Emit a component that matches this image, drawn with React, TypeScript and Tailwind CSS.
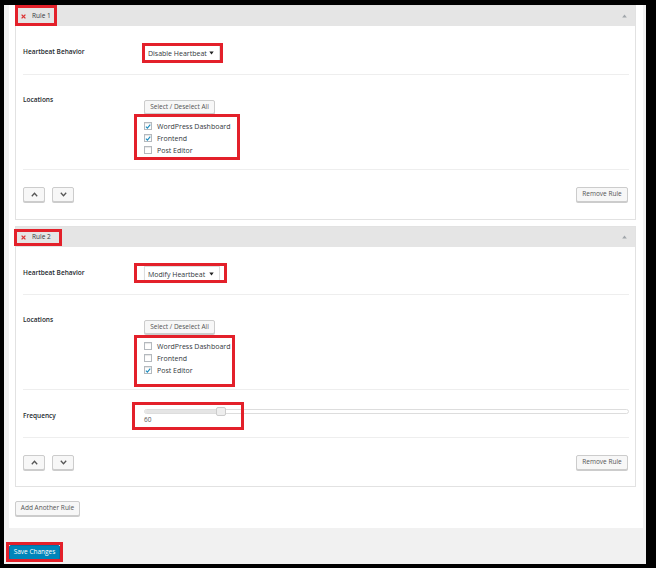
import React from "react";

function XIcon() {
  return (
    <svg width="5" height="5" viewBox="0 0 5 5" className="shrink-0">
      <path d="M0.6 0.6 L4.4 4.4 M4.4 0.6 L0.6 4.4" stroke="#dc3232" strokeWidth="1.3" fill="none" />
    </svg>
  );
}

function UpTri() {
  return (
    <svg width="5" height="4" viewBox="0 0 5 4">
      <path d="M2.5 0.5 L4.8 3.5 L0.2 3.5 Z" fill="#a0a5aa" />
    </svg>
  );
}

function DownTri() {
  return (
    <svg width="5" height="4" viewBox="0 0 5 4">
      <path d="M0.3 0.5 L4.7 0.5 L2.5 3.6 Z" fill="#222" />
    </svg>
  );
}

function Chevron({ up }: { up: boolean }) {
  return (
    <svg width="7" height="5" viewBox="0 0 7 5">
      <path
        d={up ? "M0.8 4.2 L3.5 1.3 L6.2 4.2" : "M0.8 0.8 L3.5 3.7 L6.2 0.8"}
        fill="none"
        stroke="#555"
        strokeWidth="1.3"
      />
    </svg>
  );
}

function Check({ checked, label }: { checked: boolean; label: string }) {
  return (
    <div className="flex items-center h-[12px] gap-[5px]">
      <div className="w-[8px] h-[8px] border border-[#b4b9be] bg-white shadow-[inset_0_1px_1px_rgba(0,0,0,0.1)] flex items-center justify-center">
        {checked && (
          <svg width="7" height="7" viewBox="0 0 8 8">
            <path d="M1.2 4.2 L3.2 6.2 L7 1.4" fill="none" stroke="#1e8cbe" strokeWidth="1.5" />
          </svg>
        )}
      </div>
      <span className="text-[7px] leading-none text-[#32373c]">{label}</span>
    </div>
  );
}

function WpButton({ children, className }: { children: React.ReactNode; className: string }) {
  return (
    <div
      className={
        "flex items-center justify-center bg-[#f7f7f7] border border-[#cccccc] rounded-[2px] shadow-[0_1px_0_#cccccc] text-[6.5px] leading-none text-[#555] " +
        className
      }
    >
      {children}
    </div>
  );
}

function Label({ text, pt }: { text: string; pt: string }) {
  return (
    <div className={"w-[121px] shrink-0 text-[6.5px] leading-[10px] font-semibold text-[#23282d] " + pt}>{text}</div>
  );
}

function MoveRow({ h }: { h: string }) {
  return (
    <div className={"mx-[7px] mr-[6px] flex justify-between items-start pt-[17px] " + h}>
      <div className="flex gap-[7px]">
        <WpButton className="w-[22px] h-[15px]">
          <Chevron up />
        </WpButton>
        <WpButton className="w-[22px] h-[15px]">
          <Chevron up={false} />
        </WpButton>
      </div>
      <WpButton className="w-[52px] h-[15px] mr-[1px]">Remove Rule</WpButton>
    </div>
  );
}

type RuleProps = {
  title: string;
  behavior: string;
  checks: boolean[];
  headerRed: string;
  selectRed: string;
  checksRed: string;
  row1H: string;
  freq: boolean;
  lastH: string;
};

function Rule(p: RuleProps) {
  const names = ["WordPress Dashboard", "Frontend", "Post Editor"];
  return (
    <div className="border border-[#e2e2e2] bg-white flex flex-col">
      <div className="h-[20px] bg-[#e5e5e5] flex items-center justify-between pl-[5px] pr-[8px]">
        <div className="relative flex items-center gap-[6px]">
          <XIcon />
          <span className="text-[6.5px] leading-none font-medium text-[#32373c]">{p.title}</span>
          <div className={"absolute border-[3px] border-[#e3202a] " + p.headerRed} />
        </div>
        <UpTri />
      </div>

      <div className={"mx-[7px] mr-[6px] border-b border-[#eeeeee] flex items-start " + p.row1H}>
        <Label text="Heartbeat Behavior" pt="pt-[21px]" />
        <div className="pt-[19px]">
          <div className="relative w-[76px] h-[16px] border border-[#dddddd] bg-white shadow-[0_1px_1px_rgba(0,0,0,0.06)] flex items-center justify-between pl-[3px] pr-[5px]">
            <span className="text-[7px] leading-none text-[#32373c]">{p.behavior}</span>
            <DownTri />
            <div className={"absolute border-[3px] border-[#e3202a] " + p.selectRed} />
          </div>
        </div>
      </div>

      <div className="mx-[7px] mr-[6px] h-[95px] border-b border-[#eeeeee] flex items-start">
        <Label text="Locations" pt="pt-[20px]" />
        <div className="pt-[25px] flex flex-col">
          <WpButton className="w-[71px] h-[14px]">Select / Deselect All</WpButton>
          <div className="relative mt-[6px] flex flex-col">
            {names.map((n, i) => (
              <Check key={n} checked={p.checks[i]} label={n} />
            ))}
            <div className={"absolute border-[3px] border-[#e3202a] " + p.checksRed} />
          </div>
        </div>
      </div>

      {p.freq && (
        <div className="mx-[7px] mr-[6px] h-[48px] border-b border-[#eeeeee] flex items-start">
          <Label text="Frequency" pt="pt-[21px]" />
          <div className="pt-[17px] flex-1 flex flex-col">
            <div className="relative h-[9px] flex items-center">
              <div className="w-full h-[5px] rounded-[3px] border border-[#dddddd] bg-white overflow-hidden">
                <div className="w-[76px] h-full bg-[#e5e5e5]" />
              </div>
              <div className="absolute left-[72px] top-0 w-[10px] h-[9px] rounded-[2px] bg-[#eeeeee] border border-[#cccccc]" />
              <div className="absolute -left-[12px] -top-[5px] w-[112px] h-[28px] border-[3px] border-[#e3202a]" />
            </div>
            <span className="text-[6.5px] leading-[8px] text-[#555] mt-[0px]">60</span>
          </div>
        </div>
      )}

      <MoveRow h={p.lastH} />
    </div>
  );
}

export default function App() {
  return (
    <div className="w-[656px] h-[568px] bg-black pt-[5px] pl-[4px] pr-[10px] pb-[4px] font-['Open_Sans',sans-serif]">
      <div className="h-full bg-[#f1f1f1] flex flex-col">
        <div className="ml-[5px] w-[634px] bg-white pl-[6px] pr-[7px] pb-[12px] flex flex-col">
          <Rule
            title="Rule 1"
            behavior="Disable Heartbeat"
            checks={[true, true, false]}
            headerRed="-left-[6px] -right-[6px] -top-[8px] -bottom-[7px]"
            selectRed="-left-[3px] -right-[4px] -top-[3px] -bottom-[3px]"
            checksRed="-left-[10px] w-[106px] -top-[6px] -bottom-[4px]"
            row1H="h-[49px]"
            freq={false}
            lastH="h-[49px]"
          />
          <div className="mt-[6px]">
            <Rule
              title="Rule 2"
              behavior="Modify Heartbeat"
              checks={[false, false, true]}
              headerRed="-left-[7px] -right-[11px] -top-[5px] -bottom-[6px]"
              selectRed="-left-[11px] -right-[8px] -top-[4px] -bottom-[2px]"
              checksRed="-left-[10px] w-[101px] -top-[5px] -bottom-[11px]"
              row1H="h-[48px]"
              freq={true}
              lastH="h-[48px]"
            />
          </div>
          <div className="mt-[14px] flex">
            <WpButton className="w-[65px] h-[15px]">Add Another Rule</WpButton>
          </div>
        </div>
        <div className="mt-[17px] ml-[5px] flex">
          <div className="relative w-[51px] h-[15px] bg-[#0085ba] border border-[#0073aa] rounded-[2px] shadow-[0_1px_0_#006799] flex items-center justify-center text-[6.5px] leading-none text-white">
            Save Changes
            <div className="absolute -left-[4px] -right-[4px] -top-[4px] -bottom-[3px] border-[3px] border-[#e3202a]" />
          </div>
        </div>
      </div>
    </div>
  );
}
